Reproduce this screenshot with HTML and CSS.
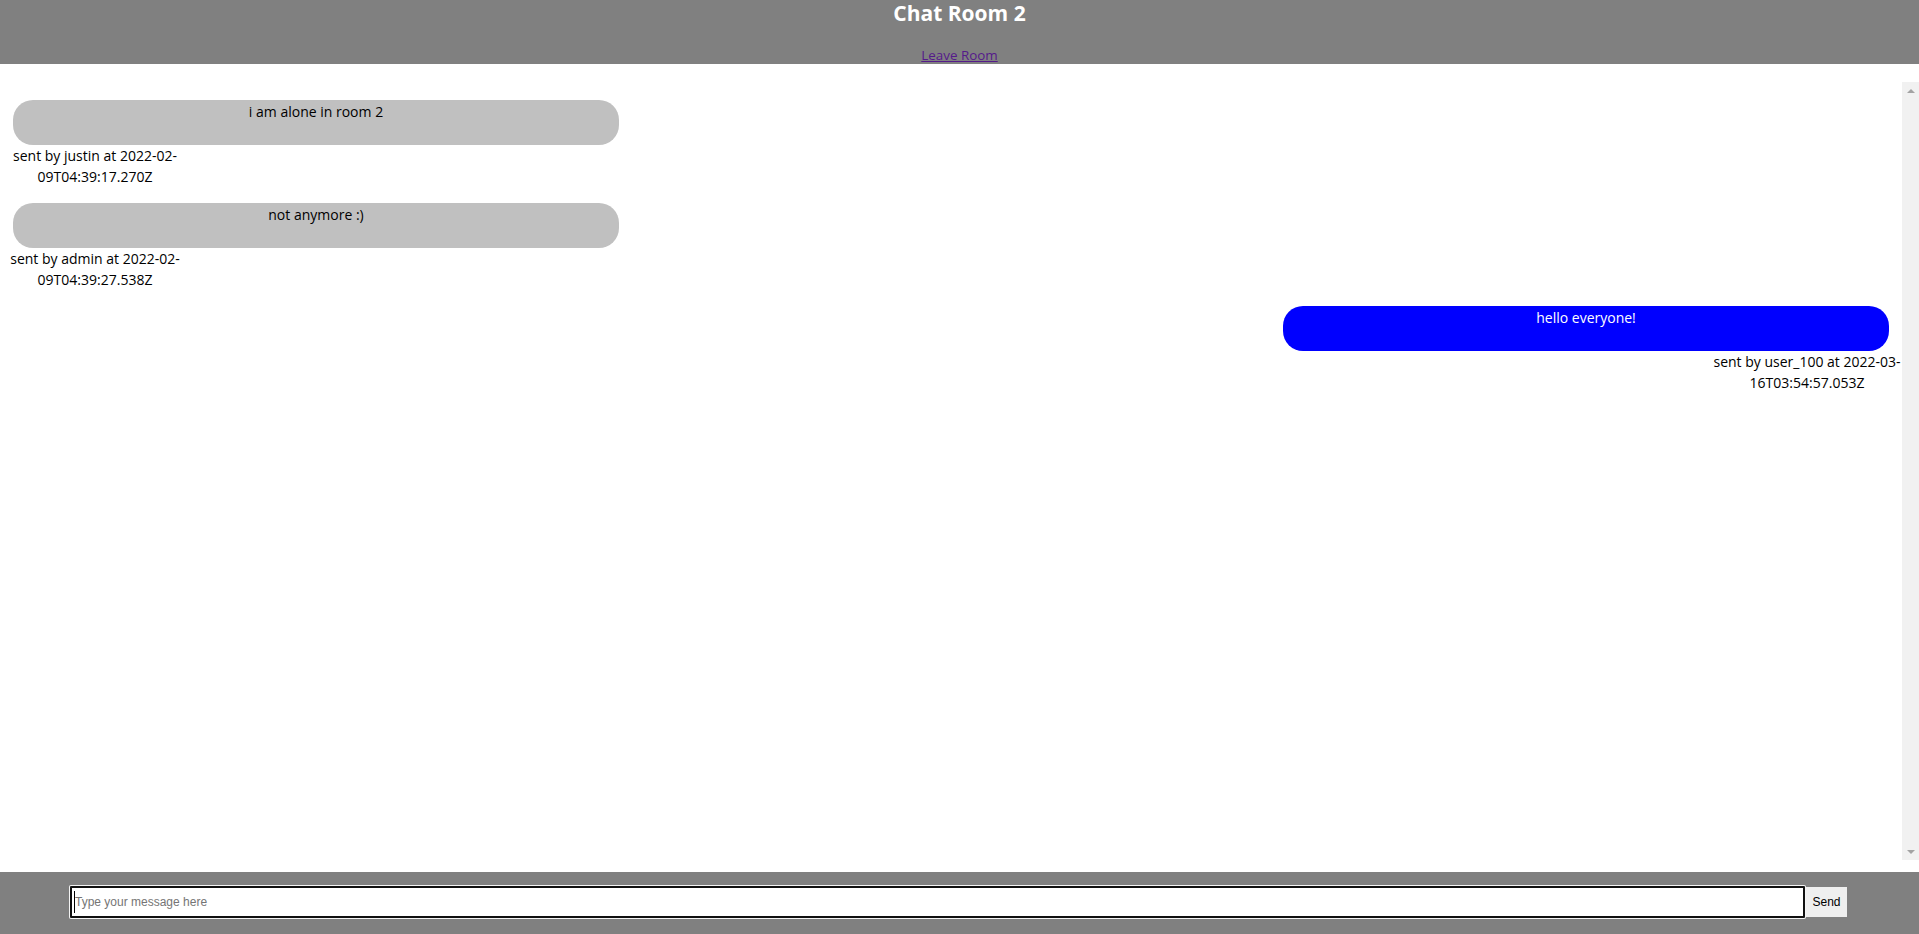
FILE: index.html
```html
<!DOCTYPE html>
<html lang="en">
<head>
<meta charset="utf-8">
<title>Chat Room 2</title>
<link rel="stylesheet" href="styles.css">
</head>
<body>
<header class="top">
  <h2 class="title">Chat Room 2</h2>
  <a class="leave" href="#">Leave Room</a>
</header>
<div class="chat">
  <main class="messages">
    <div class="msg msg-left">
      <div class="bubble bubble-other">i am alone in room 2</div>
      <div class="meta">sent by justin at 2022-02-09T04:39:17.270Z</div>
    </div>
    <div class="msg msg-left">
      <div class="bubble bubble-other">not anymore :)</div>
      <div class="meta">sent by admin at 2022-02-09T04:39:27.538Z</div>
    </div>
    <div class="msg msg-right">
      <div class="bubble bubble-mine">hello everyone!</div>
      <div class="meta">sent by user_100 at 2022-03-16T03:54:57.053Z</div>
    </div>
  </main>
  <div class="scrollbar" aria-hidden="true">
    <span class="sb-btn sb-up"></span>
    <span class="sb-track"></span>
    <span class="sb-btn sb-down"></span>
  </div>
</div>
<footer class="composer">
  <span class="input-wrap">
    <input class="msg-input" type="text" placeholder="Type your message here">
  </span>
  <button class="send" type="button">Send</button>
</footer>
</body>
</html>
```
FILE: styles.css
```css
html, body {
  margin: 0;
  padding: 0;
}
body {
  width: 1919px;
  height: 934px;
  overflow: hidden;
  background: #ffffff;
  font-family: "Open Sans", "Noto Sans", sans-serif;
  color: #000;
  display: flex;
  flex-direction: column;
}

/* header */
.top {
  height: 64px;
  flex-shrink: 0;
  background: #808080;
  display: flex;
  flex-direction: column;
  align-items: center;
  justify-content: space-between;
  box-sizing: border-box;
  padding-bottom: 0.5px;
}
.title {
  margin: 0;
  font-size: 21px;
  line-height: 26px;
  font-weight: 700;
  color: #ffffff;
}
.leave {
  font-size: 13.4px;
  line-height: 18px;
  color: #551a8b;
  text-decoration: underline;
}

/* messages area */
.chat {
  height: 778px;
  flex-shrink: 0;
  margin: 18px 0 12px;
  display: flex;
}
.messages {
  flex: 1;
  min-width: 0;
  padding-top: 18px;
  box-sizing: border-box;
  overflow: hidden;
  display: flex;
  flex-direction: column;
}

/* fake classic scrollbar */
.scrollbar {
  width: 17px;
  flex-shrink: 0;
  background: #f1f1f1;
  display: flex;
  flex-direction: column;
}
.sb-track {
  flex: 1;
}
.sb-btn {
  height: 17px;
  display: flex;
  align-items: center;
  justify-content: center;
}
.sb-btn::before {
  content: "";
  width: 0;
  height: 0;
  border-left: 4px solid transparent;
  border-right: 4px solid transparent;
}
.sb-up::before {
  border-bottom: 4px solid #a3a3a3;
}
.sb-down::before {
  border-top: 4px solid #a3a3a3;
}

.msg {
  display: flex;
  flex-direction: column;
  margin-bottom: 15.33px;
  flex-shrink: 0;
}
.msg-left {
  align-items: flex-start;
}
.msg-right {
  align-items: flex-end;
}
.bubble {
  width: 606px;
  height: 45px;
  box-sizing: border-box;
  padding-top: 1px;
  border-radius: 20px;
  text-align: center;
  font-size: 14px;
  line-height: 21.33px;
}
.msg-left .bubble {
  margin-left: 13px;
}
.msg-right .bubble {
  margin-right: 13px;
}
.bubble-other {
  background: #c0c0c0;
  color: #000;
}
.bubble-mine {
  background: #0000ff;
  color: #ffffff;
}
.meta {
  width: 190px;
  font-size: 14px;
  line-height: 21.33px;
  text-align: center;
}

/* composer */
.composer {
  height: 62px;
  flex-shrink: 0;
  background: #808080;
  display: flex;
  align-items: flex-start;
  padding: 14px 0 0 70px;
  box-sizing: border-box;
}
.input-wrap {
  position: relative;
  display: block;
}
.input-wrap::after {
  content: "";
  position: absolute;
  left: 4px;
  top: 5px;
  width: 1px;
  height: 22px;
  background: #000;
}
.msg-input {
  display: block;
  width: 1735px;
  height: 32px;
  box-sizing: border-box;
  margin: 0;
  padding: 1px 3px;
  border: 2px solid #101010;
  border-radius: 1px;
  box-shadow: 0 0 0 1px #f4f4f4;
  outline: none;
  background: #fff;
  font-family: "Liberation Sans", Arial, sans-serif;
  font-size: 12px;
}
.msg-input::placeholder {
  color: #757575;
}
.send {
  display: block;
  width: 41px;
  height: 30px;
  margin: 1px 0 0 1px;
  padding: 0;
  border: none;
  background: #efefef;
  color: #000;
  font-family: "Liberation Sans", Arial, sans-serif;
  font-size: 12px;
}
```
